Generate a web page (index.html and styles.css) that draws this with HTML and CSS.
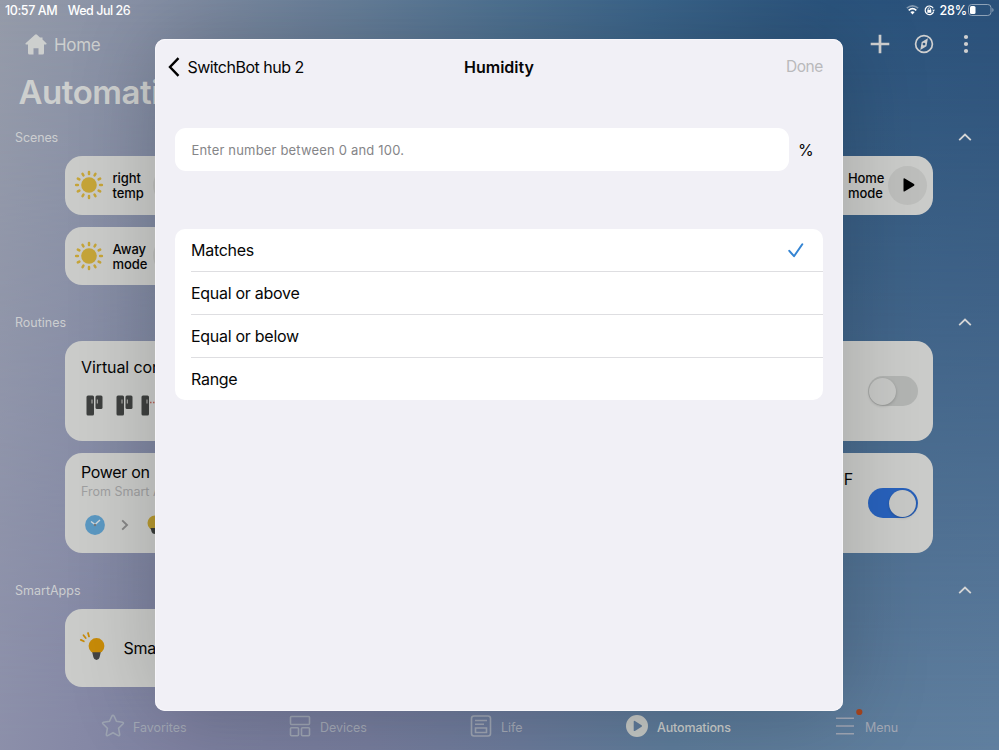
FILE: index.html
```html
<!DOCTYPE html>
<html lang="en">
<head>
<meta charset="utf-8">
<title>Automations</title>
<link rel="stylesheet" href="styles.css">
</head>
<body>
<svg class="defs" width="0" height="0">
  <defs>
    <symbol id="sun" viewBox="0 0 30 30">
      <circle cx="15" cy="15" r="7.8"/>
      <g stroke="#c6a538" stroke-width="2.5" stroke-linecap="round">
        <path id="ray" d="M15 2.1v1.8"/>
        <use href="#ray" transform="rotate(30 15 15)"/><use href="#ray" transform="rotate(60 15 15)"/>
        <use href="#ray" transform="rotate(90 15 15)"/><use href="#ray" transform="rotate(120 15 15)"/>
        <use href="#ray" transform="rotate(150 15 15)"/><use href="#ray" transform="rotate(180 15 15)"/>
        <use href="#ray" transform="rotate(210 15 15)"/><use href="#ray" transform="rotate(240 15 15)"/>
        <use href="#ray" transform="rotate(270 15 15)"/><use href="#ray" transform="rotate(300 15 15)"/>
        <use href="#ray" transform="rotate(330 15 15)"/>
      </g>
    </symbol>
    <symbol id="up" viewBox="0 0 14 9"><path d="M1.2 7.2 7 1.5l5.800 5.700" fill="none" stroke="#d6d6d6" stroke-width="1.800"/></symbol>
    <symbol id="sensor" viewBox="0 0 17 21">
      <rect x=".5" y=".5" width="7.500" height="20" rx="1.500"/><rect x="9.500" y=".5" width="7" height="13.500" rx="1.500"/>
      <path d="M6 4.500v4M11.300 4.500v4" stroke="#bcbcba" stroke-width="1"/>
    </symbol>
  </defs>
</svg>
<div class="app">
  <div class="status">
    <span class="time">10:57 AM</span><span class="date">Wed Jul 26</span>
    <svg class="wifi" width="13" height="10" viewBox="0 0 13 10" fill="none"><path d="M.8 3.200Q6.500-1.500 12.200 3.200" stroke="#8298af" stroke-width="1.500"/><path d="M2.700 5.300Q6.500 2 10.300 5.300" stroke="#fff" stroke-width="1.700"/><path d="M4.300 7 6.500 9.400 8.700 7Q6.500 5.300 4.300 7Z" fill="#fff"/></svg>
    <svg class="lock" width="11" height="11" viewBox="0 0 11 11" fill="none" stroke="#fff"><path d="M9.200 3.200A4.300 4.300 0 1 0 9.600 6.500" stroke-width="1.200"/><path d="M8 4.700h3L9.700 6.300Z" fill="#fff" stroke="none"/><rect x="3.300" y="4.800" width="4" height="3" fill="#fff" stroke="none"/><path d="M4.100 5V3.900a1.200 1.200 0 0 1 2.400 0V5" stroke-width=".8"/></svg>
    <span class="pct">28%</span>
    <svg class="battery" width="26" height="12" viewBox="0 0 26 12"><rect x=".5" y=".5" width="22.500" height="11" rx="3.200" fill="none" stroke="#8fa2b7"/><rect x="2" y="2" width="5.500" height="8" rx="1.500" fill="#fff"/><path d="M24.300 4v4q1.300-.5 1.300-2t-1.300-2Z" fill="#8fa2b7"/></svg>
  </div>
  <header class="top">
    <svg width="22" height="21" viewBox="0 0 22 21" fill="#cdcfce"><path d="M10 .7q1-.9 2 0l3 2.700h2.500v2.200l3.900 3.600q.7.900-.4 1.300H19V19q0 1.500-1.500 1.500H13.500v-6.200h-5v6.200h-4Q3 20.500 3 19v-8.500H1q-1.100-.4-.4-1.300Z"/></svg>
    <span class="home">Home</span>
    <svg class="plus" width="20" height="20" viewBox="0 0 20 20"><path d="M10 .7v18.600M.7 10h18.600" stroke="#d0d0d0" stroke-width="2.700"/></svg>
    <svg class="compass" width="20" height="20" viewBox="0 0 20 20" fill="none" stroke="#d0d0d0" stroke-width="1.700"><circle cx="10" cy="10" r="8.400"/><path fill="#d0d0d0" fill-rule="evenodd" stroke="none" d="M13.900 4.300 12.500 12.300 6.300 16 7.700 8Z M10 8.700a1.400 1.400 0 1 0 0 2.800a1.400 1.400 0 1 0 0-2.800Z"/></svg>
    <svg class="dots" width="6" height="20" viewBox="0 0 6 20" fill="#d0d0d0"><circle cx="3" cy="3" r="2.100"/><circle cx="3" cy="10" r="2.100"/><circle cx="3" cy="17" r="2.100"/></svg>
  </header>
  <h1>Automations</h1>

  <div class="section"><span class="s1">Scenes</span><svg width="14" height="9"><use href="#up"/></svg></div>
  <div class="scenes">
    <div class="scene"><svg class="sun"><use href="#sun"/></svg><span>right<br>temp</span><i class="play"></i></div>
    <div class="scene"><span class="gap"></span><span>Home<br>mode</span><i class="play"><svg width="12" height="14" viewBox="0 0 12 14"><path d="M.5 1.200Q.5-.2 1.800.6l9.200 5.500q1 .9 0 1.700l-9.200 5.500Q.5 14 .5 12.700Z"/></svg></i></div>
    <div class="scene"><svg class="sun"><use href="#sun"/></svg><span>Away<br>mode</span><i class="play"></i></div>
  </div>

  <div class="section routines"><span class="s2">Routines</span><svg width="14" height="9"><use href="#up"/></svg></div>
  <div class="card routine first">
    <div class="body">
      <div class="title t1">Virtual con</div>
      <div class="sensors"><svg width="17" height="21"><use href="#sensor"/></svg><svg width="17" height="21"><use href="#sensor"/></svg>
      <svg class="third" width="22" height="21" viewBox="0 0 22 21" fill="#3e403f"><rect x=".5" y=".5" width="7.500" height="20" rx="1.500"/><path d="M6 4.500v4" stroke="#bcbcba"/><path d="M9 7.500h9" stroke="#b56259" stroke-width="1.300" stroke-dasharray="1.500 1.500"/></svg></div>
    </div>
    <div class="toggle"><i></i></div>
  </div>
  <div class="card routine second">
    <div class="body">
      <div class="title t2">Power on</div>
      <div class="sub">From Smart A</div>
      <div class="flow">
        <svg width="20" height="20" viewBox="0 0 20 20"><circle cx="10" cy="10" r="9.900" fill="#5b98c2"/><path d="M6 6.500l4 3 5-4.500" fill="none" stroke="#d2d8dc" stroke-width="1.400"/><circle cx="10" cy="10" r="1.200" fill="#777"/></svg>
        <svg class="chev" width="8" height="12" viewBox="0 0 8 12"><path d="M1.200 1.400 6 6l-4.800 4.600" fill="none" stroke="#868686" stroke-width="1.900"/></svg>
        <svg class="bulb" width="16" height="20" viewBox="0 0 16 20"><circle cx="8" cy="8" r="7.500" fill="#b89a31"/><path d="M3.500 13h9l-1.200 4q-.6 2-3.300 2t-3.300-2Z" fill="#3a3d3b"/></svg>
      </div>
    </div>
    <span class="unit">°F</span>
    <div class="toggle on"><i></i></div>
  </div>

  <div class="section apps"><span class="s3">SmartApps</span><svg width="14" height="9"><use href="#up"/></svg></div>
  <div class="card smart">
    <svg width="26" height="29" viewBox="0 0 26 29"><circle cx="16.500" cy="14" r="7.900" fill="#c88b08"/><path d="M12.200 20.200h8.500l-1.100 5q-.6 2.700-3.100 2.700t-3.100-2.700Z" fill="#444"/><path d="M.8 7.900l3 1.400M3.500 3.300l2.200 2.700M8 1l1 3.400" stroke="#c88b08" stroke-width="1.800" stroke-linecap="round"/></svg>
    <span class="title t3">Smart</span>
  </div>

  <nav>
    <a class="n1"><svg width="24" height="24" viewBox="0 0 24 24"><path d="M11 2q1-1.500 2 0l2.500 5.300 6 .9q1.500.4.6 1.600l-4.500 4.500 1.100 6.300q0 1.600-1.500 1L12 18.700l-5.200 2.900q-1.500.6-1.500-1l1.100-6.300L1.900 9.800Q1 8.600 2.500 8.200l6-.9Z"/></svg><span>Favorites</span></a>
    <a class="n2"><svg width="22" height="22" viewBox="0 0 22 22"><rect x="1.500" y="1.500" width="19" height="8" rx="1"/><rect x="1.500" y="12.700" width="8" height="8" rx="1"/><rect x="12.500" y="12.700" width="8" height="8" rx="1"/></svg><span>Devices</span></a>
    <a class="n3"><svg width="22" height="22" viewBox="0 0 22 22"><rect x="1.500" y="1" width="19" height="20" rx="2.500"/><path d="M5 5.500h12M5 9.300h9M5.500 13h11v4.500h-11Z"/></svg><span>Life</span></a>
    <a class="n4"><svg width="22" height="22" viewBox="0 0 22 22"><path fill="#c3c6c3" fill-rule="evenodd" stroke="none" d="M11 0a11 11 0 1 0 0 22a11 11 0 1 0 0-22ZM7.700 6.700q0-1.200 1.200-.8l6.700 4.300q1 .8 0 1.500l-6.700 4.300q-1.200.4-1.200-.8Z"/></svg><span>Automations</span></a>
    <a class="n5"><svg width="26" height="28" viewBox="0 0 26 28"><path d="M1 8.300h18M1 16h18M1 23.700h18"/><circle cx="24.300" cy="2" r="3.100" fill="#a4451f" stroke="none"/></svg><span>Menu</span></a>
  </nav>

  <main class="dialog">
    <div class="bar">
      <svg width="12" height="20" viewBox="0 0 12 20"><path d="M10.500 1.200 2 10l8.500 8.800" fill="none" stroke="#000" stroke-width="2.400"/></svg>
      <span class="back">SwitchBot hub 2</span><strong>Humidity</strong><span class="done">Done</span>
    </div>
    <div class="entry"><div class="field"><span>Enter number between 0 and 100.</span></div><span class="percent">%</span></div>
    <ul>
      <li><span class="o1">Matches</span><svg width="16" height="16" viewBox="0 0 16 16"><path d="M1.300 8.800 6 14.200 14.300 2.300" fill="none" stroke="#3484d3" stroke-width="2" stroke-linecap="round" stroke-linejoin="round"/></svg></li>
      <li><span class="o2">Equal or above</span></li>
      <li><span class="o3">Equal or below</span></li>
      <li><span class="o4">Range</span></li>
    </ul>
  </main>
</div>
</body>
</html>
```

FILE: styles.css
```css
* { box-sizing: border-box; }
body { margin: 0; font-family: Inter, sans-serif; color: #060606; }
.defs { position: absolute; }
svg { display: block; flex: none; overflow: visible; }
i { display: block; }
.app {
  position: relative; width: 999px; height: 750px; overflow: hidden; isolation: isolate;
  display: flex; flex-direction: column;
  background: linear-gradient(97deg, #959ba9 0, #8790a5 13%, #667f9a 33%, #4f7393 46%, #3b658b 60%, #2b547d 76%, #2a4f78 100%);
}
.app::before {
  content: ""; position: absolute; inset: 0; z-index: -1;
  background: linear-gradient(97deg, #9397ae 0, #8689a6 15%, #7c7f9f 28%, #767c9c 42%, #6b7a9a 56%, #5d7b99 70%, #607f9f 100%);
  mask-image: linear-gradient(180deg, transparent, #000);
}

.status { height: 20px; padding: 0 5px; display: flex; align-items: center; color: #fff; font-size: 12.500px; font-weight: 500; letter-spacing: -.35px; white-space: nowrap; }
.date { margin-left: 10.500px; flex: 1; letter-spacing: -.48px; }
.time { letter-spacing: -.4px; }
.pct { letter-spacing: -.2px; }
.lock { margin: 0 5px; }
.battery { margin-left: 1px; }

.top { height: 48px; padding: 0 30px 0 25px; display: flex; align-items: center; color: #cdcfce; }
.home { margin-left: 7px; padding-top: 1px; font-size: 17px; letter-spacing: -.3px; flex: 1; }
.compass { margin: 0 29px 0 24px; }
h1 { margin: 2px 0 0 18.500px; height: 48px; line-height: 45px; font-size: 33px; letter-spacing: -.45px; font-weight: 600; color: #cdcfce; }

.section { height: 20px; padding: 0 27px 0 15px; margin-top: 9px; display: flex; align-items: center; justify-content: space-between; font-size: 12.500px; color: #ccced0; }
.s1 { letter-spacing: -.1px; }
.scenes { width: 868px; margin: 9px 0 0 65px; display: grid; grid-template-columns: 132px 132px; justify-content: space-between; row-gap: 12px; }
.scene { height: 58.500px; border-radius: 17px; background: #cbccca; display: flex; align-items: center; font-size: 13px; font-weight: 500; line-height: 15px; letter-spacing: -.1px; }
.scene span:not(.gap) { width: 40px; padding-top: 1.500px; }
.sun { width: 30px; height: 30px; margin: 0 9px 0 8.500px; fill: #c6a538; }
.gap { width: 47px; }
.play { width: 39px; height: 39px; border-radius: 50%; background: #bebfbd; display: flex; align-items: center; justify-content: center; }
.play svg { margin-left: 2px; }

.routines { margin-top: 27px; }
.card { width: 868px; margin-left: 65px; border-radius: 17px; background: #cbccca; display: flex; }
.routine { height: 100px; padding-left: 16px; }
.first { margin-top: 9px; }
.second { margin-top: 12px; }
.body { flex: 1; white-space: nowrap; }
.title { font-size: 16px; line-height: 20px; letter-spacing: -.3px; }
.t1 { margin-top: 16px; letter-spacing: -.1px; }
.t2 { margin-top: 9px; }
.sensors { display: flex; margin: 18px 0 0 5px; fill: #3e403f; gap: 12.500px; }
.third { margin-left: -4px; }
.sub { font-size: 12.500px; line-height: 16px; margin-top: 2px; color: #9fa0a1; }
.flow { display: flex; align-items: center; margin: 14.500px 0 0 4px; }
.chev { margin: 0 18px 0 16px; }
.unit { width: 31px; margin-top: 16px; font-size: 16px; line-height: 20px; }
.toggle { width: 50px; height: 30px; margin: 35px 15.500px 0 0; border-radius: 15px; background: #b3b5b3; padding: 1.500px; }
.toggle i { width: 27px; height: 27px; border-radius: 50%; background: #c8c9c7; box-shadow: 0 1px 3px rgba(0,0,0,.2); }
.toggle.on { background: #2862bd; }
.toggle.on i { margin-left: 20px; }

.apps { margin-top: 27px; }
.smart { width: 600px; height: 78px; margin-top: 9px; padding-left: 15px; align-items: center; }
.smart svg { margin-top: -4px; }
.t3 { margin-left: 17.500px; }

nav { margin-top: 19px; height: 40px; padding-left: 101px; display: flex; align-items: center; font-size: 12.500px; color: #a2a8b5; }
nav a { display: flex; flex: none; align-items: center; height: 24px; width: 188px; }
nav svg { fill: none; stroke: #9da4b2; stroke-width: 1.600; }
nav span { margin-left: 8px; padding-top: 2px; letter-spacing: -.05px; }
.n2 { width: 181px; }
.n2 span, .n3 span { margin-left: 9px; }
.n3 { width: 156px; }
.n4 { width: 209px; color: #c8cac9; font-weight: 500; }
.n4 span { margin-left: 9px; letter-spacing: -.15px; }
.n5 svg { margin-top: -4px; }
.n5 span { margin-left: 4px; }

.dialog { position: absolute; left: 155px; top: 39px; width: 688px; height: 672px; border-radius: 10px; background: #f1f0f6; box-shadow: 0 0 90px rgba(0,0,0,.2), inset 0 0 0 1px #f7f6fa; padding: 0 20px; }
.bar { height: 55px; margin-left: -7px; display: flex; align-items: center; position: relative; font-size: 16px; }
.back { margin-left: 7.500px; flex: 1; letter-spacing: -.5px; }
.bar strong { position: absolute; left: 296px; font-weight: 600; }
.done { color: #b9b9bb; font-size: 15.500px; letter-spacing: -.4px; }
.entry { height: 43px; margin-top: 34px; display: flex; align-items: center; }
.field { width: 613.500px; height: 43px; border-radius: 11px; background: #fff; padding-left: 16.500px; display: flex; align-items: center; font-size: 13px; letter-spacing: .18px; color: #858588; }
.percent { margin-left: 9.500px; font-size: 16px; }
ul { list-style: none; margin: 58px 0 0; padding: 0; height: 171px; border-radius: 10px; background: #fff; }
li { height: 43px; margin-left: 16px; padding-right: 19.500px; display: flex; align-items: center; justify-content: space-between; font-size: 16px; letter-spacing: -.28px; }
li:not(:last-child) { border-bottom: 1px solid #dedee1; }
.o4 { margin-top: -2px; }
```
